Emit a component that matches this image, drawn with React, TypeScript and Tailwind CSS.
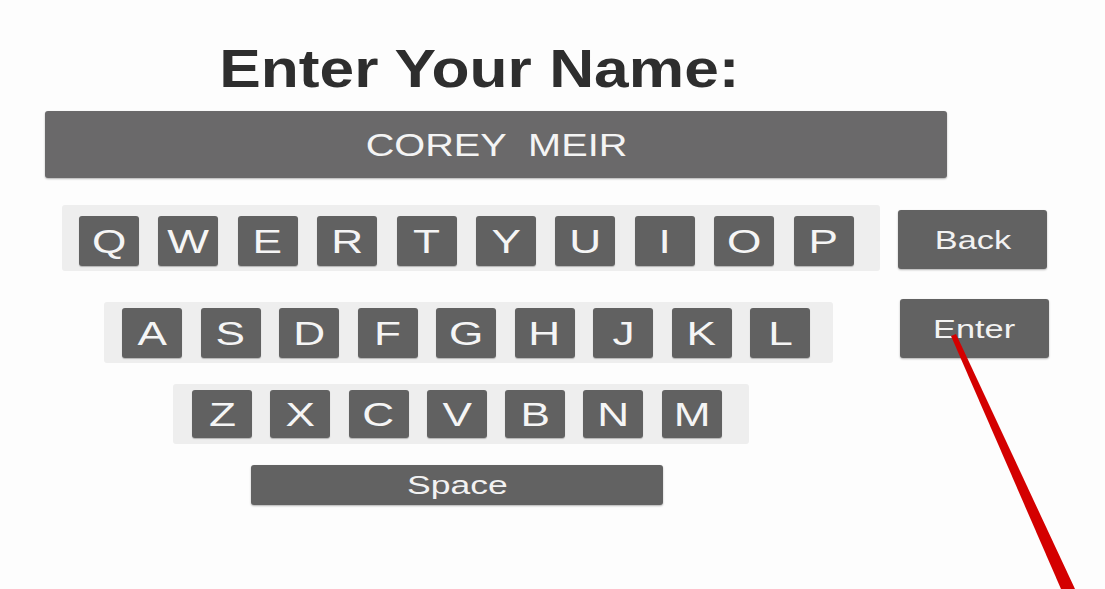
import React from "react";

const row1 = ["Q", "W", "E", "R", "T", "Y", "U", "I", "O", "P"];
const row2 = ["A", "S", "D", "F", "G", "H", "J", "K", "L"];
const row3 = ["Z", "X", "C", "V", "B", "N", "M"];

function Key({ label, tall }: { label: string; tall?: boolean }) {
  return (
    <div
      className={`w-[60px] ${tall ? "h-[50px]" : "h-[48px]"} bg-[#616161] rounded-[3px] flex items-center justify-center text-[#f5f5f5] text-[34px] leading-none shadow-[0_1px_1px_rgba(0,0,0,0.25)]`}
    >
      <span className="inline-block scale-x-[1.3]">{label}</span>
    </div>
  );
}

function WideButton({ label }: { label: string }) {
  return (
    <div className="w-[149px] h-[59px] bg-[#626262] rounded-[3px] flex items-center justify-center text-[#f2f2f2] text-[26px] leading-none shadow-[0_1px_2px_rgba(0,0,0,0.3)]">
      <span className="inline-block scale-x-[1.32]">{label}</span>
    </div>
  );
}

export default function App() {
  return (
    <div
      className="relative w-[1105px] h-[589px] overflow-hidden bg-[#fdfdfd] flex flex-col pt-[42px]"
      style={{ fontFamily: '"Liberation Sans", Arial, sans-serif' }}
    >
      <div className="w-[958px] flex justify-center">
        <h1 className="inline-block text-[53px] font-bold leading-none text-[#2e2e2e] scale-x-[1.175]">
          Enter Your Name:
        </h1>
      </div>

      <div className="ml-[45px] mt-[16px] w-[902px] h-[67px] bg-[#6a696a] rounded-[3px] flex items-center justify-center shadow-[0_1px_2px_rgba(0,0,0,0.3)]">
        <span className="inline-block whitespace-pre text-[32px] leading-none text-[#f4f4f4] scale-x-[1.24]">
          COREY  MEIR
        </span>
      </div>

      {/* top row + back */}
      <div className="flex items-start mt-[27px]">
        <div className="ml-[62px] w-[818px] h-[66px] bg-[#eeeeee] rounded-[3px] flex items-start pt-[11px] pl-[17px] gap-[19.4px]">
          {row1.map((k) => (
            <Key key={k} label={k} tall />
          ))}
        </div>
        <div className="ml-[18px] mt-[5px]">
          <WideButton label="Back" />
        </div>
      </div>

      {/* middle row + enter */}
      <div className="flex items-start mt-[28px]">
        <div className="ml-[104px] mt-[3px] w-[729px] h-[61px] bg-[#eeeeee] rounded-[3px] flex items-start pt-[6px] pl-[18px] gap-[18.5px]">
          {row2.map((k) => (
            <Key key={k} label={k} tall />
          ))}
        </div>
        <div className="ml-[67px]">
          <WideButton label="Enter" />
        </div>
      </div>

      {/* bottom row */}
      <div className="ml-[173px] mt-[21px] w-[576px] h-[60px] bg-[#eeeeee] rounded-[3px] flex items-start pt-[6px] pl-[19px] gap-[18.3px]">
        {row3.map((k) => (
          <Key key={k} label={k} />
        ))}
      </div>

      <div className="ml-[251px] mt-[21px] w-[412px] h-[40px] bg-[#626262] rounded-[3px] flex items-center justify-center text-[#f2f2f2] text-[25px] leading-none shadow-[0_1px_2px_rgba(0,0,0,0.3)]">
        <span className="inline-block scale-x-[1.42]">Space</span>
      </div>

      {/* pointer ray */}
      <svg
        className="absolute inset-0 pointer-events-none"
        width="1105"
        height="589"
        viewBox="0 0 1105 589"
      >
        <polygon points="951,336 956,334 1075,589 1061,589" fill="#d40000" />
      </svg>
    </div>
  );
}
